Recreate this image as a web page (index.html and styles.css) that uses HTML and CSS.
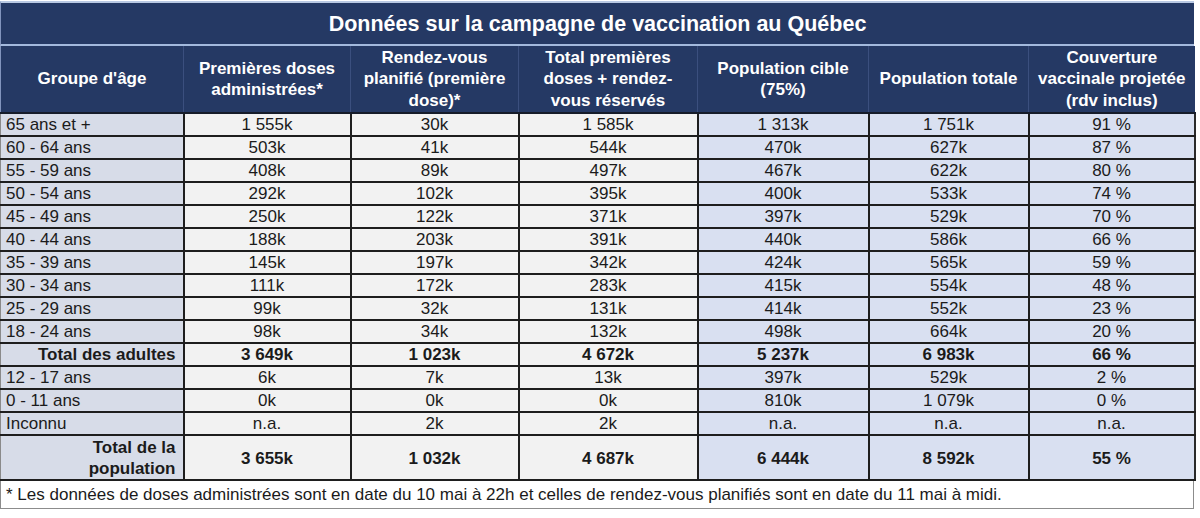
FILE: index.html
```html
<!DOCTYPE html>
<html lang="fr">
<head>
    <meta charset="UTF-8">
    <meta name="viewport" content="width=device-width, initial-scale=1.0">
    <title>Données sur la campagne de vaccination au Québec</title>
    <link rel="stylesheet" href="styles.css">
</head>
<body>
    <div class="sheet">
        <div class="title">Données sur la campagne de vaccination au Québec</div>

        <table class="data">
            <colgroup>
                <col class="c-age">
                <col class="c-first">
                <col class="c-rdv">
                <col class="c-total">
                <col class="c-target">
                <col class="c-pop">
                <col class="c-cover">
            </colgroup>
            <thead>
                <tr>
                    <th>Groupe d'âge</th>
                    <th>Premières doses administrées*</th>
                    <th>Rendez-vous planifié (première dose)*</th>
                    <th class="narrow">Total premières doses + rendez-vous réservés</th>
                    <th>Population cible (75%)</th>
                    <th>Population totale</th>
                    <th>Couverture vaccinale projetée (rdv inclus)</th>
                </tr>
            </thead>
            <tbody>
                <tr><td class="age">65 ans et +</td><td>1 555k</td><td>30k</td><td>1 585k</td><td class="blue">1 313k</td><td class="blue">1 751k</td><td class="blue">91 %</td></tr>
                <tr><td class="age">60 - 64 ans</td><td>503k</td><td>41k</td><td>544k</td><td class="blue">470k</td><td class="blue">627k</td><td class="blue">87 %</td></tr>
                <tr><td class="age">55 - 59 ans</td><td>408k</td><td>89k</td><td>497k</td><td class="blue">467k</td><td class="blue">622k</td><td class="blue">80 %</td></tr>
                <tr><td class="age">50 - 54 ans</td><td>292k</td><td>102k</td><td>395k</td><td class="blue">400k</td><td class="blue">533k</td><td class="blue">74 %</td></tr>
                <tr><td class="age">45 - 49 ans</td><td>250k</td><td>122k</td><td>371k</td><td class="blue">397k</td><td class="blue">529k</td><td class="blue">70 %</td></tr>
                <tr><td class="age">40 - 44 ans</td><td>188k</td><td>203k</td><td>391k</td><td class="blue">440k</td><td class="blue">586k</td><td class="blue">66 %</td></tr>
                <tr><td class="age">35 - 39 ans</td><td>145k</td><td>197k</td><td>342k</td><td class="blue">424k</td><td class="blue">565k</td><td class="blue">59 %</td></tr>
                <tr><td class="age">30 - 34 ans</td><td>111k</td><td>172k</td><td>283k</td><td class="blue">415k</td><td class="blue">554k</td><td class="blue">48 %</td></tr>
                <tr><td class="age">25 - 29 ans</td><td>99k</td><td>32k</td><td>131k</td><td class="blue">414k</td><td class="blue">552k</td><td class="blue">23 %</td></tr>
                <tr><td class="age">18 - 24 ans</td><td>98k</td><td>34k</td><td>132k</td><td class="blue">498k</td><td class="blue">664k</td><td class="blue">20 %</td></tr>
                <tr class="sum"><td class="age">Total des adultes</td><td>3 649k</td><td>1 023k</td><td>4 672k</td><td class="blue">5 237k</td><td class="blue">6 983k</td><td class="blue">66 %</td></tr>
                <tr><td class="age">12 - 17 ans</td><td>6k</td><td>7k</td><td>13k</td><td class="blue">397k</td><td class="blue">529k</td><td class="blue">2 %</td></tr>
                <tr><td class="age">0 - 11 ans</td><td>0k</td><td>0k</td><td>0k</td><td class="blue">810k</td><td class="blue">1 079k</td><td class="blue">0 %</td></tr>
                <tr><td class="age">Inconnu</td><td>n.a.</td><td>2k</td><td>2k</td><td class="blue">n.a.</td><td class="blue">n.a.</td><td class="blue">n.a.</td></tr>
                <tr class="sum tall"><td class="age">Total de la population</td><td>3 655k</td><td>1 032k</td><td>4 687k</td><td class="blue">6 444k</td><td class="blue">8 592k</td><td class="blue">55 %</td></tr>
            </tbody>
        </table>

        <div class="note">* Les données de doses administrées sont en date du 10 mai à 22h et celles de rendez-vous planifiés sont en date du 11 mai à midi.</div>
    </div>
</body>
</html>
```

FILE: styles.css
```css
* {
    margin: 0;
    padding: 0;
    box-sizing: border-box;
}

body {
    font-family: "Liberation Sans", Arial, Helvetica, sans-serif;
    background-color: #ffffff;
    color: #1b1b1b;
}

.sheet {
    width: 1194px;
}

.title {
    height: 45px;
    margin-top: 1px;
    padding-top: 2px;
    border-top: 2px solid #b9c9e3;
    border-bottom: 2px solid #a3b9dd;
    border-left: 1px solid #8294bd;
    background-color: #253964;
    color: #ffffff;
    font-size: 21.5px;
    font-weight: bold;
    text-align: center;
    line-height: 39px;
}

.data {
    width: 1194px;
    table-layout: fixed;
    border-collapse: collapse;
}

.c-age { width: 183px; }
.c-first { width: 167px; }
.c-rdv { width: 168px; }
.c-total { width: 179px; }
.c-target { width: 171px; }
.c-pop { width: 160px; }
.c-cover { width: 166px; }

.data th {
    height: 67px;
    padding: 0 4px;
    background-color: #253964;
    color: #ffffff;
    font-size: 17px;
    font-weight: bold;
    line-height: 21.5px;
    border-left: 1px solid #3b4f7e;
    border-bottom: 2px solid #161c2a;
    vertical-align: middle;
}

.data th:first-child {
    border-left: 1px solid #8294bd;
}

.data th.narrow {
    padding: 0 12px;
}

.data td {
    height: 23px;
    padding: 1px 4px 0;
    font-size: 17px;
    line-height: 20px;
    text-align: center;
    background-color: #f2f2f2;
    border: 2px solid #1e1e1e;
}

.data td:first-child {
    border-left: 1px solid #8a8a8a;
}

.data td:last-child {
    border-right: 2px solid #2a2a2a;
}

.data td.age {
    text-align: left;
    padding-left: 5px;
    background-color: #d7dce8;
}

.data td.blue {
    background-color: #d9e0f1;
}

.sum td {
    font-weight: bold;
}

.sum td.age {
    text-align: right;
    padding-right: 7px;
}

.tall td {
    height: 43px;
    line-height: 21px;
}

.note {
    height: 28px;
    padding-left: 5px;
    border: 1px solid #8c8c8c;
    border-top: none;
    font-size: 17px;
    line-height: 27px;
    background-color: #ffffff;
}
```
